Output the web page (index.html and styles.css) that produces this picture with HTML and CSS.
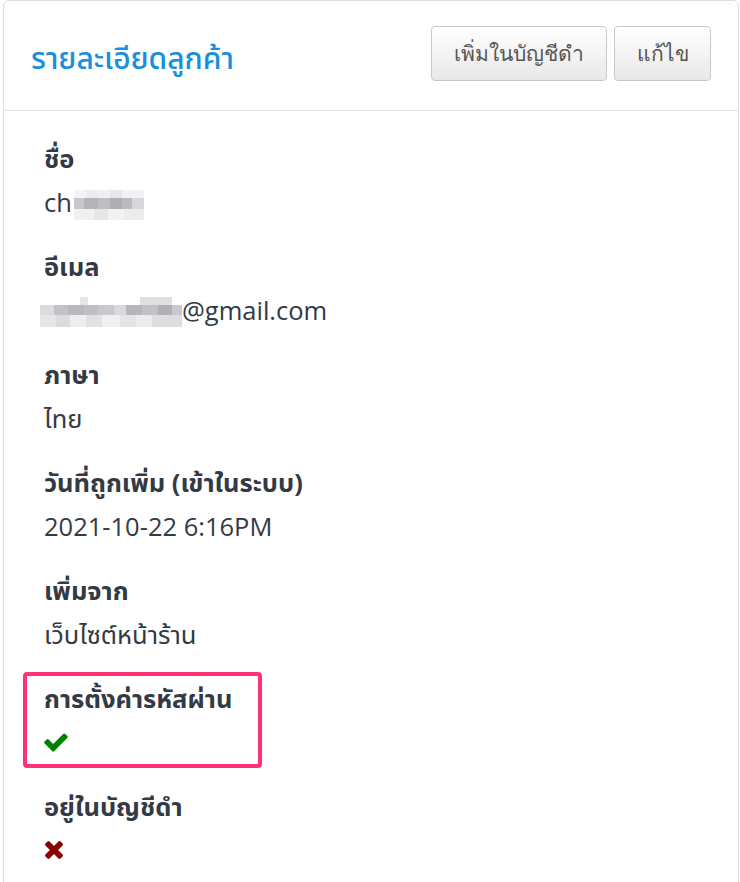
FILE: index.html
```html
<!DOCTYPE html>
<html lang="th">
<head>
<meta charset="utf-8">
<title>รายละเอียดลูกค้า</title>
<link rel="stylesheet" href="styles.css">
</head>
<body>
<div class="card">
  <div class="card-header">
    <h2 class="title">รายละเอียดลูกค้า</h2>
    <div class="actions">
      <button class="btn btn-wide">เพิ่มในบัญชีดำ</button>
      <button class="btn btn-narrow">แก้ไข</button>
    </div>
  </div>
  <div class="card-body">
    <div class="field">
      <div class="label">ชื่อ</div>
      <div class="value">ch<span class="blur blur-name"></span></div>
    </div>
    <div class="field">
      <div class="label">อีเมล</div>
      <div class="value"><span class="blur blur-email"></span>@gmail.com</div>
    </div>
    <div class="field">
      <div class="label">ภาษา</div>
      <div class="value">ไทย</div>
    </div>
    <div class="field">
      <div class="label">วันที่ถูกเพิ่ม (เข้าในระบบ)</div>
      <div class="value">2021-10-22 6:16PM</div>
    </div>
    <div class="field">
      <div class="label">เพิ่มจาก</div>
      <div class="value">เว็บไซต์หน้าร้าน</div>
    </div>
    <div class="field highlighted">
      <div class="label">การตั้งค่ารหัสผ่าน</div>
      <div class="value">
        <svg class="icon icon-ok" viewBox="128 300 1543 1250" width="24" height="19"><path d="M1671 566q0 40-28 68l-724 724-136 136q-28 28-68 28t-68-28l-136-136-362-362q-28-28-28-68t28-68l136-136q28-28 68-28t68 28l294 295 656-657q28-28 68-28t68 28l136 136q28 28 28 68z"/></svg>
      </div>
    </div>
    <div class="field">
      <div class="label">อยู่ในบัญชีดำ</div>
      <div class="value">
        <svg class="icon icon-no" viewBox="110 366 1188 1188" width="18" height="18"><path d="M1298 1322q0 40-28 68l-136 136q-28 28-68 28t-68-28l-294-294-294 294q-28 28-68 28t-68-28l-136-136q-28-28-28-68t28-68l294-294-294-294q-28-28-28-68t28-68l136-136q28-28 68-28t68 28l294 294 294-294q28-28 68-28t68 28l136 136q28 28 28 68t-28 68l-294 294 294 294q28 28 28 68z"/></svg>
      </div>
    </div>
  </div>
</div>
</body>
</html>
```

FILE: styles.css
```css
html, body {
  margin: 0;
  padding: 0;
  background: #ffffff;
}
body {
  font-family: "Open Sans", "Noto Sans", "Noto Sans Thai", sans-serif;
  color: #333a44;
}
.card {
  margin-left: 3px;
  width: 736px;
  min-height: 900px;
  border: 1px solid #dddddd;
  border-radius: 6px;
  box-sizing: border-box;
}
.card-header {
  height: 110px;
  box-sizing: border-box;
  border-bottom: 1px solid #e3e3e3;
  display: flex;
  align-items: center;
  justify-content: space-between;
  padding: 0 27px 0 27px;
}
.title {
  margin: 0;
  font-size: 30px;
  font-weight: 500;
  color: #1a8fdb;
  line-height: 36px;
  padding-top: 4px;
}
.actions {
  display: flex;
  gap: 7px;
  margin-top: -4px;
}
.btn {
  height: 55px;
  padding: 0;
  font-family: "Open Sans", "Noto Sans", sans-serif;
  font-size: 21px;
  color: #555555;
  background: linear-gradient(#ffffff, #e8e8e8);
  border: 1px solid #c8c8c8;
  border-radius: 4px;
}
.btn-wide {
  width: 176px;
}
.btn-narrow {
  width: 97px;
}
.card-body {
  padding: 31px 0 0 40px;
}
.field {
  margin-bottom: 32px;
}
.label {
  font-size: 25.5px;
  font-weight: 700;
  line-height: 32px;
  color: #333a44;
}
.value {
  margin-top: 12px;
  height: 32px;
  font-size: 25.5px;
  line-height: 32px;
  color: #333a44;
  display: flex;
  align-items: center;
}
.highlighted {
  position: relative;
}
.highlighted::after {
  content: "";
  position: absolute;
  left: -21px;
  top: -10px;
  width: 239px;
  height: 96px;
  box-sizing: border-box;
  border: 4px solid #ff3371;
  border-radius: 4px;
}
.blur {
  display: inline-block;
  height: 30px;
  background-color: #f3f3f5;
}
.blur-name {
  width: 70px;
  margin-left: 2px;
  margin-top: 6px;
  background:
    linear-gradient(90deg, #f4f4f6 0 12px, #ececef 12px 24px, #f0f0f2 24px 36px, #e8e8eb 36px 48px, #f2f2f4 48px) 0 0 / 100% 8px no-repeat,
    linear-gradient(90deg, #c8c8cc 0 10px, #b3b3b8 10px 24px, #bfbfc3 24px 36px, #aeaeb3 36px 48px, #bcbcc0 48px 58px, #d8d8db 58px) 0 8px / 100% 11px no-repeat,
    linear-gradient(90deg, #f0f0f2 0 20px, #e6e6e9 20px 34px, #f2f2f4 34px 50px, #ececee 50px) 0 19px / 100% 11px no-repeat,
    #f3f3f5;
}
.blur-email {
  width: 142px;
  margin-left: -4px;
  margin-top: 4px;
  background:
    linear-gradient(90deg, #ffffff 0 40px, #e6e6e9 40px 48px, #ffffff 48px 100px, #e0e0e3 100px 132px, #ffffff 132px) 0 0 / 100% 8px no-repeat,
    linear-gradient(90deg, #dcdcdf 0 14px, #c3c3c7 14px 28px, #b8b8bd 28px 44px, #c0c0c4 44px 58px, #c9c9cd 58px 74px, #dadadd 74px 86px, #b6b6bb 86px 102px, #c2c2c6 102px 118px, #b0b0b5 118px 132px, #c8c8cc 132px) 0 8px / 100% 10px no-repeat,
    linear-gradient(90deg, #e6e6e9 0 16px, #dcdce0 16px 30px, #eeeef0 30px 46px, #e2e2e5 46px 62px, #f0f0f2 62px 80px, #e4e4e7 80px 96px, #ececee 96px 112px, #dedee1 112px) 0 18px / 100% 12px no-repeat;
}
.icon {
  display: block;
}
.icon-ok {
  fill: #008000;
}
.icon-no {
  fill: #8b0000;
  margin-left: 1px;
}
```
